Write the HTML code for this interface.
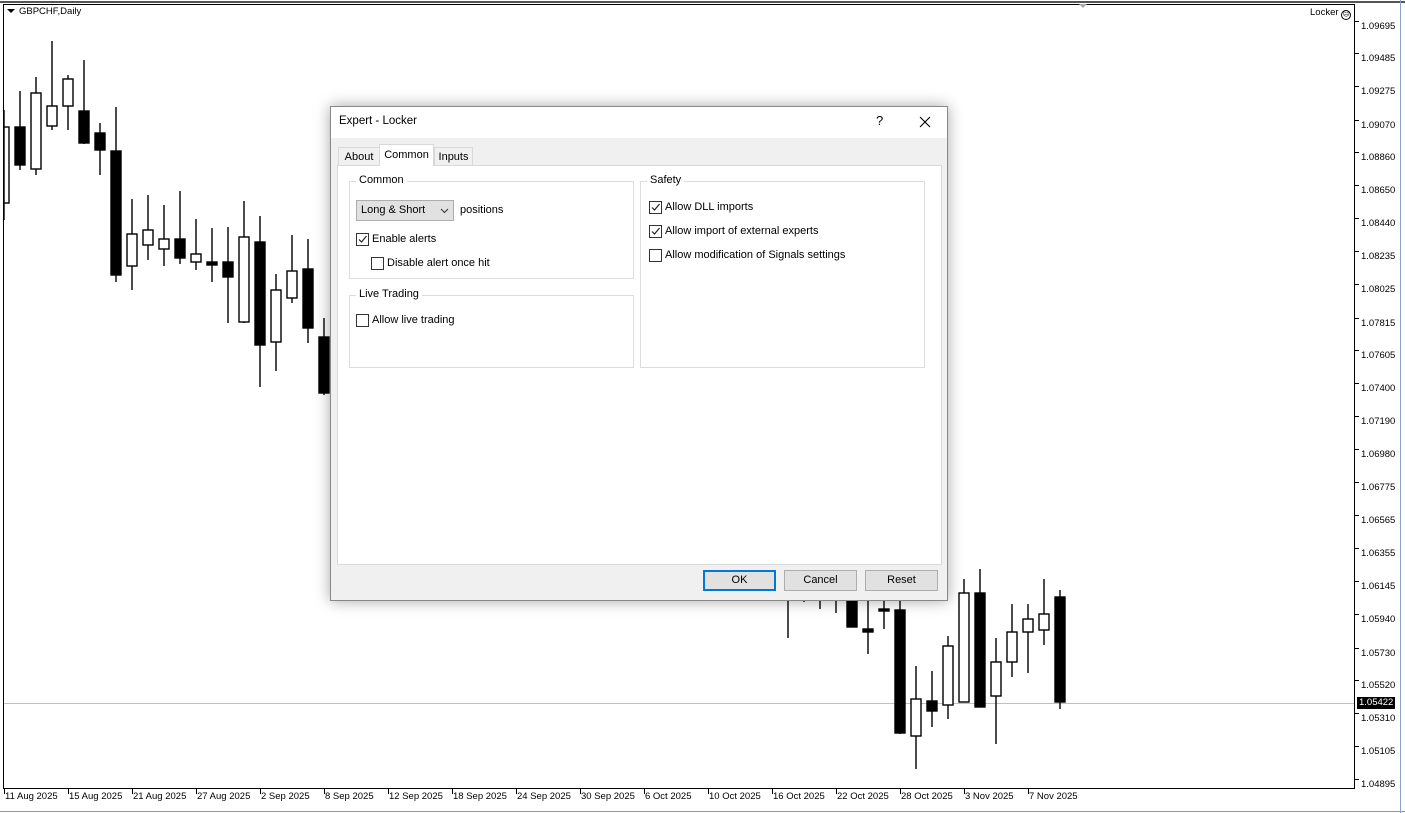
<!DOCTYPE html>
<html><head><meta charset="utf-8"><style>
*{margin:0;padding:0;box-sizing:border-box}
body{width:1405px;height:813px;overflow:hidden;background:#fff;font-family:"Liberation Sans",sans-serif;position:relative}
.ax{position:absolute;font-size:10px;color:#000}
.dt{font-size:9.5px}
#dlg{position:absolute;left:330px;top:106px;width:618px;height:495px;background:#f0f0f0;border:1px solid #888;box-shadow:0 0 14px rgba(0,0,0,.35);font-size:11px;color:#000}
#dlg .tb{position:absolute;left:0;top:0;width:616px;height:31px;background:#fff}
.abs{position:absolute}
.grp{position:absolute;border:1px solid #dcdcdc}
.grp span.l{position:absolute;top:-8px;left:6px;background:#fff;padding:0 3px}
.cb{position:absolute;width:13px;height:13px;border:1px solid #333;background:#fff}
.btn{position:absolute;top:463px;width:73px;height:21px;border:1px solid #adadad;background:#e1e1e1;text-align:center;line-height:19px}
</style></head><body>
<div class="abs" style="left:0;top:1px;width:1405px;height:2px;background:#555"></div>
<svg class="abs" style="left:0;top:0" width="1405" height="813">
<rect x="3.5" y="4.5" width="1351" height="784" fill="none" stroke="#000"/>
<line x1="4" y1="703.5" x2="1354" y2="703.5" stroke="#c0c0c0"/>
<polygon points="1079,4 1087,4 1083,8" fill="#aaa"/>
<polygon points="7,9 15,9 11,13" fill="#000"/>
<line x1="0" y1="811.5" x2="1405" y2="811.5" stroke="#999"/>
<line x1="1400.5" y1="0" x2="1400.5" y2="813" stroke="#8aa4c8"/>
</svg>
<svg class="abs" style="left:0;top:0" width="1405" height="813" id="cs"></svg>
<div class="ax" style="left:19px;top:6px;font-size:9.5px">GBPCHF,Daily</div>
<div class="ax" style="left:1310px;top:7px;font-size:9.5px">Locker <span style="display:inline-block;width:10px;height:10px;border:1px solid #000;border-radius:50%;font-size:7px;line-height:8px;text-align:center;vertical-align:-1px">☹</span></div>
<div id="prices"></div>
<div id="dates"></div>
<div id="dlg">
 <div class="tb"></div>
 <div class="abs" style="left:8px;top:8px;font-size:11.5px">Expert - Locker</div>
 <div class="abs" style="left:545px;top:6px;font-size:13px">?</div>
 <svg class="abs" style="left:588px;top:9px" width="12" height="12"><path d="M1 1L11 11M11 1L1 11" stroke="#000" stroke-width="1.1"/></svg>
 <div class="abs" style="left:6px;top:58px;width:605px;height:400px;background:#fff;border:1px solid #d9d9d9"></div>
 <div class="abs" style="left:7px;top:40px;width:42px;height:18px;border:1px solid #d9d9d9;border-bottom:none;background:#f0f0f0;text-align:center;line-height:18px">About</div>
 <div class="abs" style="left:48px;top:37px;width:55px;height:22px;border:1px solid #d9d9d9;border-bottom:none;background:#fff;text-align:center;line-height:20px">Common</div>
 <div class="abs" style="left:103px;top:40px;width:39px;height:18px;border:1px solid #d9d9d9;border-bottom:none;background:#f0f0f0;text-align:center;line-height:18px">Inputs</div>
 <div class="grp" style="left:18px;top:74px;width:285px;height:98px"><span class="l">Common</span></div>
 <div class="abs" style="left:25px;top:93px;width:98px;height:21px;background:#e1e1e1;border:1px solid #adadad;padding:3px 0 0 4px">Long &amp; Short<svg class="abs" style="left:83px;top:7px" width="9" height="6"><path d="M1 1L4.5 4.5L8 1" fill="none" stroke="#333"/></svg></div>
 <div class="abs" style="left:129px;top:97px">positions</div>
 <div class="cb" style="left:25px;top:126px"><svg width="11" height="11" style="position:absolute;left:0;top:0"><path d="M2 5.5L4.5 8L9.5 2" fill="none" stroke="#222" stroke-width="1.2"/></svg></div>
 <div class="abs" style="left:41px;top:126px">Enable alerts</div>
 <div class="cb" style="left:40px;top:150px"></div>
 <div class="abs" style="left:56px;top:150px">Disable alert once hit</div>
 <div class="grp" style="left:18px;top:188px;width:285px;height:73px"><span class="l">Live Trading</span></div>
 <div class="cb" style="left:25px;top:207px"></div>
 <div class="abs" style="left:41px;top:207px">Allow live trading</div>
 <div class="grp" style="left:309px;top:74px;width:285px;height:187px"><span class="l">Safety</span></div>
 <div class="cb" style="left:318px;top:94px"><svg width="11" height="11" style="position:absolute;left:0;top:0"><path d="M2 5.5L4.5 8L9.5 2" fill="none" stroke="#222" stroke-width="1.2"/></svg></div>
 <div class="abs" style="left:334px;top:94px">Allow DLL imports</div>
 <div class="cb" style="left:318px;top:118px"><svg width="11" height="11" style="position:absolute;left:0;top:0"><path d="M2 5.5L4.5 8L9.5 2" fill="none" stroke="#222" stroke-width="1.2"/></svg></div>
 <div class="abs" style="left:334px;top:118px">Allow import of external experts</div>
 <div class="cb" style="left:318px;top:142px"></div>
 <div class="abs" style="left:334px;top:142px">Allow modification of Signals settings</div>
 <div class="btn" style="left:372px;border:2px solid #0078d7;line-height:17px">OK</div>
 <div class="btn" style="left:453px">Cancel</div>
 <div class="btn" style="left:534px">Reset</div>
</div>
<script>
var C=[[4,'w',127,203,110,220],[20,'b',127,165,91,170],[36,'w',93,169,77,175],[52,'w',106,126,41,130],[68,'w',79,106,75,130],[84,'b',111,143,60,144],[100,'b',133,150,123,175],[116,'b',151,275,107,282],[132,'w',234,266,199,290],[148,'w',230,245,195,260],[164,'w',239,249,205,266],[180,'b',239,258,191,264],[196,'w',254,262,219,270],[212,'b',262,265,228,282],[228,'b',262,277,227,323],[244,'w',237,322,201,323],[260,'b',242,345,216,387],[276,'w',290,342,274,371],[292,'w',271,298,235,303],[308,'b',269,328,239,343],[324,'b',337,393,318,395],
[788,'n',0,0,598,638],[804,'n',0,0,598,602],[820,'n',0,0,598,609],[836,'n',0,0,598,613],[852,'b',598,627,598,627],[868,'b',629,632,598,654],[884,'b',609,611,598,629],[900,'b',610,733,598,734],[916,'w',699,736,666,769],[932,'b',701,711,671,727],[948,'w',646,705,636,719],[964,'w',593,702,579,702],[980,'b',593,707,569,707],[996,'w',662,696,638,744],[1012,'w',632,662,604,677],[1028,'w',619,632,604,673],[1044,'w',614,630,579,645],[1060,'b',597,702,590,709]];
var s='<g stroke="#000" stroke-width="1.4">';
C.forEach(function(c){var x=c[0];s+='<line x1="'+x+'" y1="'+c[4]+'" x2="'+x+'" y2="'+c[5]+'"/>';
if(c[1]!='n'){var l=Math.max(x-5,4);s+='<rect x="'+l+'" y="'+c[2]+'" width="'+(x+5-l)+'" height="'+Math.max(c[3]-c[2],2)+'" fill="'+(c[1]=='b'?'#000':'#fff')+'"/>';}});
s+='</g>';document.getElementById('cs').innerHTML=s;
var P=[[27,'1.09695'],[59,'1.09485'],[92,'1.09275'],[126,'1.09070'],[158,'1.08860'],[191,'1.08650'],[224,'1.08440'],[257,'1.08235'],[290,'1.08025'],[324,'1.07815'],[356,'1.07605'],[389,'1.07400'],[422,'1.07190'],[455,'1.06980'],[488,'1.06775'],[521,'1.06565'],[554,'1.06355'],[587,'1.06145'],[620,'1.05940'],[654,'1.05730'],[686,'1.05520'],[719,'1.05310'],[752,'1.05105'],[785,'1.04895']];
var h='';P.forEach(function(p){h+='<div class="ax" style="left:1355px;top:'+(p[0]-6)+'px;width:4px;height:1px;background:#000"></div><div class="ax" style="left:1361px;top:'+(p[0]-6)+'px;font-size:9.5px">'+p[1]+'</div>';});
h+='<div class="ax" style="left:1357px;top:697px;background:#000;color:#fff;padding:0 2px;line-height:12px;font-size:9.5px">1.05422</div>';
document.getElementById('prices').innerHTML=h;
var D=['11 Aug 2025','15 Aug 2025','21 Aug 2025','27 Aug 2025','2 Sep 2025','8 Sep 2025','12 Sep 2025','18 Sep 2025','24 Sep 2025','30 Sep 2025','6 Oct 2025','10 Oct 2025','16 Oct 2025','22 Oct 2025','28 Oct 2025','3 Nov 2025','7 Nov 2025'];
var g='';D.forEach(function(d,i){var x=4+i*64;g+='<div class="ax" style="left:'+x+'px;top:789px;width:1px;height:5px;background:#000"></div><div class="ax dt" style="left:'+(x+1)+'px;top:791px">'+d+'</div>';});
document.getElementById('dates').innerHTML=g;
</script>
</body></html>
